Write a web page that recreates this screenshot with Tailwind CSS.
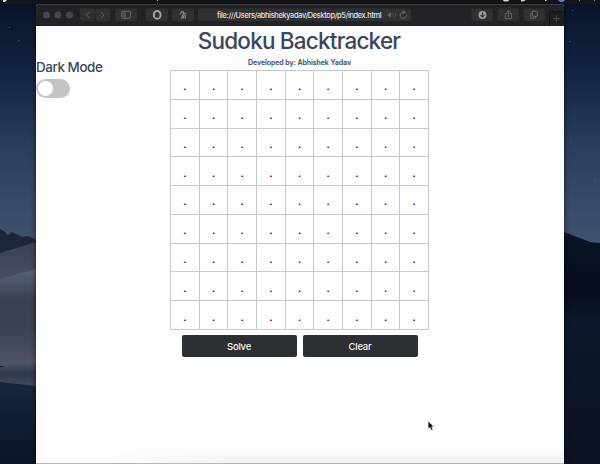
<!DOCTYPE html>
<html lang="en">
<head>
<meta charset="utf-8">
<title>Sudoku Backtracker</title>
<script src="https://cdn.jsdelivr.net/npm/@tailwindcss/browser@4"></script>
</head>
<body class="relative w-[600px] h-[464px] overflow-hidden bg-[#0b1528] font-['Inter','Liberation_Sans',sans-serif]">
<!-- desktop wallpaper -->
<svg class="absolute inset-0" width="600" height="464" viewBox="0 0 600 464">
  <defs>
    <linearGradient id="sky" x1="0" y1="0" x2="0" y2="1"><stop offset="0" stop-color="#07142a"/><stop offset=".3" stop-color="#142542"/><stop offset=".6" stop-color="#2b405f"/><stop offset="1" stop-color="#43536d"/></linearGradient>
    <linearGradient id="dune" x1="0" y1="0" x2="0" y2="1"><stop offset="0" stop-color="#3a4155"/><stop offset="1" stop-color="#4b5064"/></linearGradient>
    <linearGradient id="dune2" x1="0" y1="0" x2="0" y2="1"><stop offset="0" stop-color="#59627a"/><stop offset=".3" stop-color="#3b4353"/><stop offset=".6" stop-color="#3b4150"/><stop offset="1" stop-color="#515467"/></linearGradient>
    <linearGradient id="low" x1="0" y1="0" x2="0" y2="1"><stop offset="0" stop-color="#172842"/><stop offset=".4" stop-color="#101e35"/><stop offset="1" stop-color="#0b1529"/></linearGradient>
    <linearGradient id="right" x1="0" y1="0" x2="0" y2="1"><stop offset="0" stop-color="#0b1525"/><stop offset=".25" stop-color="#060d1b"/><stop offset=".4" stop-color="#0d182a"/><stop offset="1" stop-color="#0c1221"/></linearGradient>
    <linearGradient id="fold" x1="0" y1="0" x2="0" y2="1"><stop offset="0" stop-color="#535a70"/><stop offset=".5" stop-color="#31394b"/><stop offset="1" stop-color="#3f4a60"/></linearGradient>
  </defs>
  <rect width="600" height="250" fill="url(#sky)"/>
  <path d="M0 229L4 231L8 235L12 232L18 235L22 237L28 236L36 240V262L0 256Z" fill="#1d2739"/>
  <path d="M0 253L36 242V285H0Z" fill="url(#dune)"/>
  <path d="M0 279L36 269V366H0Z" fill="url(#dune2)"/>
  <path d="M0 367L36 360V386H0Z" fill="url(#fold)"/>
  <path d="M0 382L36 386V464H0Z" fill="url(#low)"/>
  <path d="M564 232L590 242L600 243V464H564Z" fill="url(#right)"/>
  <g fill="#8995a8" opacity=".6"><circle cx="9.500" cy="27.500" r=".6"/><circle cx="19" cy="40.500" r=".6"/><circle cx="572.500" cy="10.500" r=".6"/><circle cx="570" cy="41.500" r=".6"/><circle cx="571" cy="142" r=".5"/><circle cx="595" cy="180" r=".5"/></g>
</svg>

<!-- menu bar -->
<div class="absolute top-0 left-0 w-full h-[4px] bg-[#16171c]">
  <svg class="block" width="600" height="4" viewBox="0 0 600 4" fill="#e2e2e2"><path d="M3 0h4L5 2H3zM157 0h1v1h-1zM503 0h6l-1 1.500h-4zM521 0h5l-3 1.500h-2zM545 0h1.500v1H545z"/><path d="M558 0h7l-2 2h-3z" fill="#4a8bd8"/><path d="M579 0h1v1h-1zM594 0h1v1h-1z" fill="#777"/></svg>
</div>

<!-- browser window -->
<main class="absolute left-[36px] top-[4px] w-[528px] h-[460px] rounded-t-[3px] overflow-hidden bg-[#fdfdfe] shadow-[0_0_5px_#000a]">
  <header class="relative h-[22px] bg-[#222326] border-t border-[#3b3b3d] border-b border-b-[#1b1b1d]">
    <svg class="block -mt-px" width="528" height="22" viewBox="36 4 528 22" fill="none" stroke-linecap="round" stroke-linejoin="round">
      <g fill="#47484a"><circle cx="46.500" cy="15" r="3.500"/><circle cx="58" cy="15" r="3.500"/><circle cx="69.500" cy="15" r="3.500"/></g>
      <g fill="#303133"><rect x="80" y="8.500" width="15" height="12.500" rx="2"/><rect x="95.500" y="8.500" width="14.500" height="12.500" rx="2"/><rect x="115" y="8.500" width="22" height="12.500" rx="2"/><rect x="146" y="8.500" width="22" height="12.500" rx="2"/><rect x="172" y="8.500" width="22" height="12.500" rx="2"/><rect x="198" y="8.500" width="213" height="12.500" rx="2"/><rect x="471.500" y="8.500" width="21.500" height="12.500" rx="2"/><rect x="497.500" y="8.500" width="21.500" height="12.500" rx="2"/><rect x="523.500" y="8.500" width="21.500" height="12.500" rx="2"/></g>
      <path d="M89.500 12L86.500 15L89.500 18M101 12L104 15L101 18" stroke="#626365" stroke-width=".9"/>
      <g stroke="#77787a" stroke-width=".8"><rect x="121.800" y="11.300" width="8.600" height="7" rx=".8"/><path d="M125 11.500v6.500M123.200 13.300h.6M123.200 14.800h.6M123.200 16.300h.6"/></g>
      <ellipse cx="157.200" cy="14.900" rx="3.400" ry="3.900" stroke="#a1a2a3" stroke-width="2"/>
      <path d="M180.200 13.800l1.900-2.300h1.100v3.200l-1.900 3.500M183.200 12.500l2.600 1.200M183.200 14.500l2 .8v3M183.500 16.500l-.2 1.700" stroke="#858687" stroke-width="1.200"/>
      <path d="M387.500 13.800h1.500l2.200-1.900v6.200l-2.200-1.900h-1.500z" fill="#606163"/><path d="M393 13.500q.8 1.500 0 3M395 12.500q1.400 2.500 0 5" stroke="#505153" stroke-width=".8"/>
      <path d="M405.500 12.900A3.200 3.200 0 1 0 406.500 15.500M403.200 10.800l1.600 1.600-1.800 1" stroke="#747577" stroke-width=".9"/>
      <circle cx="482.500" cy="15" r="4" fill="#9a9b9d"/><path d="M482.500 12.700v4M480.900 15.300l1.600 1.700 1.600-1.700" stroke="#303133" stroke-width="1.100"/>
      <path d="M506.700 13.500h-1.500v5.200h6.400v-5.200h-1.500M508.400 16.300v-5.500M506.800 12.200l1.600-1.600 1.600 1.600" stroke="#747577" stroke-width=".8"/>
      <g stroke="#77787a" stroke-width=".8"><rect x="532.300" y="11.300" width="5" height="5" rx=".6"/><path d="M532.200 13.200h-1.500v5h5v-1.800"/></g>
      <path d="M549.500 26V12H564" stroke="#111214"/><rect x="550" y="12.500" width="14" height="13.500" fill="#1e1f21"/><path d="M553.500 18.500h6M556.500 15.500v6" stroke="#57585a" stroke-width=".8"/>
    </svg>
    <div class="absolute left-[181px] top-[5px] text-[7.4px] leading-[11px] tracking-[-0.34px] font-medium text-[#e3e3e4] whitespace-nowrap">file:///Users/abhishekyadav/Desktop/p5/index.html</div>
  </header>

  <section class="relative h-[438px]">
    <div class="flex flex-col items-center pr-px text-[#3b4656]">
      <h1 class="h-[31px] leading-[30px] text-[22.5px] tracking-[-0.8px] font-medium whitespace-nowrap -ml-px">Sudoku Backtracker</h1>
      <p class="h-[13px] leading-[11px] text-[7px] tracking-[-0.06px] font-semibold whitespace-nowrap">Developed by: Abhishek Yadav</p>
      <div id="board" class="grid grid-cols-9 grid-rows-9 w-[259px] h-[260px] border-t border-l border-[#c9c9c9]"></div>
      <div class="flex gap-[6px] mt-[5px] text-[9.5px] tracking-[-0.25px] font-medium text-[#f4f4f4]">
        <button class="w-[115px] h-[22px] pt-[2px] rounded-[2px] bg-[#2c3035]">Solve</button>
        <button class="w-[115px] h-[22px] pt-[2px] rounded-[2px] bg-[#2c3035]">Clear</button>
      </div>
    </div>
    <div class="absolute left-0 top-[31px]">
      <div class="h-[22px] leading-[20px] text-[13.4px] tracking-[-0.42px] font-medium text-[#3b4656] whitespace-nowrap">Dark Mode</div>
      <div class="w-[34px] h-[19px] p-[2px] rounded-full bg-[#c4c4c5]"><div class="size-[15px] rounded-full bg-white"></div></div>
    </div>
    <div class="absolute left-[60px] right-0 bottom-px h-[14px] bg-linear-to-b from-transparent to-black/5 mask-l-from-70% mask-l-to-100%"></div>
    <div class="absolute inset-x-0 bottom-0 h-px bg-[#b8b8b9]"></div>
  </section>
</main>

<!-- mouse pointer -->
<svg class="absolute left-[427px] top-[420px]" width="8" height="12" viewBox="0 0 8 12"><path d="M1.200 1.200v7.600l1.700-1.500 1.400 3 1.500-.7-1.300-2.900h2.300z" fill="#080808" stroke="#e6e6e6" stroke-width=".5"/></svg>

<script>
const board = document.getElementById('board');
for (let i = 0; i < 81; i++) {
  const cell = document.createElement('div');
  cell.className = "flex items-center justify-center border-r border-b border-[#c9c9c9] text-[10px] leading-[24px] pt-[3px] font-semibold text-black";
  cell.textContent = '.';
  board.append(cell);
}
</script>
</body>
</html>
